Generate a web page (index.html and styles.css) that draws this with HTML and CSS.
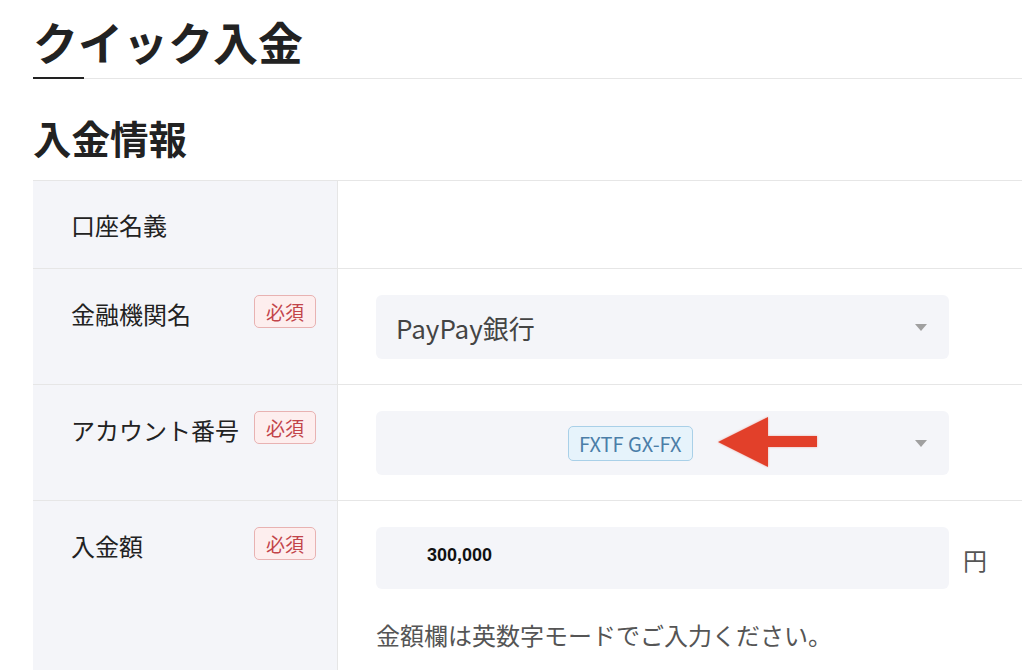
FILE: index.html
```html
<!DOCTYPE html>
<html lang="ja">
<head>
<meta charset="utf-8">
<link rel="stylesheet" href="styles.css">
</head>
<body>
<div class="page">
  <h1 class="title">クイック入金</h1>
  <div class="title-rule"><span class="bar"></span><span class="line"></span></div>
  <h2 class="heading">入金情報</h2>
  <div class="table">
    <div class="row r1">
      <div class="label"><span class="ltext">口座名義</span></div>
      <div class="value"></div>
    </div>
    <div class="row">
      <div class="label"><span class="ltext">金融機関名</span><span class="req">必須</span></div>
      <div class="value">
        <div class="select"><span class="sel-text">PayPay銀行</span><span class="caret"></span></div>
      </div>
    </div>
    <div class="row">
      <div class="label"><span class="ltext">アカウント番号</span><span class="req">必須</span></div>
      <div class="value">
        <div class="select">
          <span class="acct">FXTF GX-FX</span>
          <svg class="arrow" width="100" height="52" viewBox="0 0 100 52"><polygon points="1,26 51,1 51,20 100,20 100,31 51,31 51,51" fill="#e2402a"/></svg>
          <span class="caret"></span>
        </div>
      </div>
    </div>
    <div class="row">
      <div class="label"><span class="ltext">入金額</span><span class="req">必須</span></div>
      <div class="value">
        <div class="amount-line"><div class="amount">300,000</div><span class="yen">円</span></div>
        <p class="hint">金額欄は英数字モードでご入力ください。</p>
      </div>
    </div>
  </div>
</div>
</body>
</html>
```
FILE: styles.css
```css
* { box-sizing: border-box; }
html, body { margin: 0; padding: 0; background: #fff; }
body {
  font-family: "Noto Sans CJK JP", "Noto Sans", sans-serif;
  color: #333;
  width: 1022px;
  height: 670px;
  overflow: hidden;
}
.page { padding-left: 33px; }
.title {
  margin: 0;
  padding: 13px 0 0 0;
  font-size: 45px;
  line-height: 57px;
  font-weight: 700;
  color: #222;
}
.title-rule { display: flex; align-items: center; height: 2px; margin-top: 7px; }
.title-rule .bar { width: 51px; height: 2px; background: #222; }
.title-rule .line { flex: 1; height: 1px; background: #e6e6e6; }
.heading {
  margin: 0;
  padding-top: 34px;
  font-size: 38.5px;
  line-height: 49px;
  font-weight: 700;
  color: #222;
}
.table { margin-top: 18px; border-top: 1px solid #e6e6e6; }
.row {
  display: grid;
  grid-template-columns: 305px 1fr;
  border-bottom: 1px solid #e6e6e6;
}
.label {
  background: #f4f5f9;
  border-right: 1px solid #e6e6e6;
  padding: 28px 21px 0 38px;
  display: flex;
  justify-content: space-between;
  align-items: flex-start;
}
.r1 .label { padding-top: 27px; height: 87px; }
.ltext { font-size: 24px; line-height: 34px; color: #222; }
.req {
  margin-top: -2px;
  height: 33px;
  padding: 0 11px;
  border: 1px solid #e8b2b2;
  border-radius: 5px;
  background: #fdeeee;
  color: #c2444a;
  font-size: 19px;
  line-height: 31px;
}
.value { padding: 26px 0 25px 38px; }
.select {
  width: 573px;
  height: 64px;
  background: #f4f5f9;
  border-radius: 6px;
  display: flex;
  align-items: center;
  padding: 0 22px 0 20px;
}
.sel-text { font-size: 26px; color: #444; }
.caret {
  margin-left: auto;
  width: 0; height: 0;
  border-left: 6px solid transparent;
  border-right: 6px solid transparent;
  border-top: 7px solid #a0a0a0;
}
.acct {
  margin-left: 172px;
  height: 35px;
  padding: 0 10px;
  border: 1px solid #a9d0e8;
  border-radius: 5px;
  background: #e6f3fb;
  color: #4b7ea8;
  font-size: 20px;
  line-height: 33px;
}
.arrow { margin-left: 24px; margin-top: -2px; filter: drop-shadow(0 0 1px rgba(226,64,42,0.4)); }
.amount-line { display: flex; align-items: center; }
.amount {
  width: 573px;
  height: 62px;
  background: #f4f5f9;
  border-radius: 6px;
  padding: 16px 0 0 51px;
  font-family: "Liberation Sans", Arial, sans-serif;
  font-weight: 700;
  font-size: 18px;
  line-height: 24px;
  color: #111;
}
.yen { margin-left: 14px; margin-top: 2px; font-size: 24px; color: #555; }
.hint {
  margin: 29px 0 0 0;
  font-size: 24px;
  line-height: 34px;
  color: #555;
}
```
